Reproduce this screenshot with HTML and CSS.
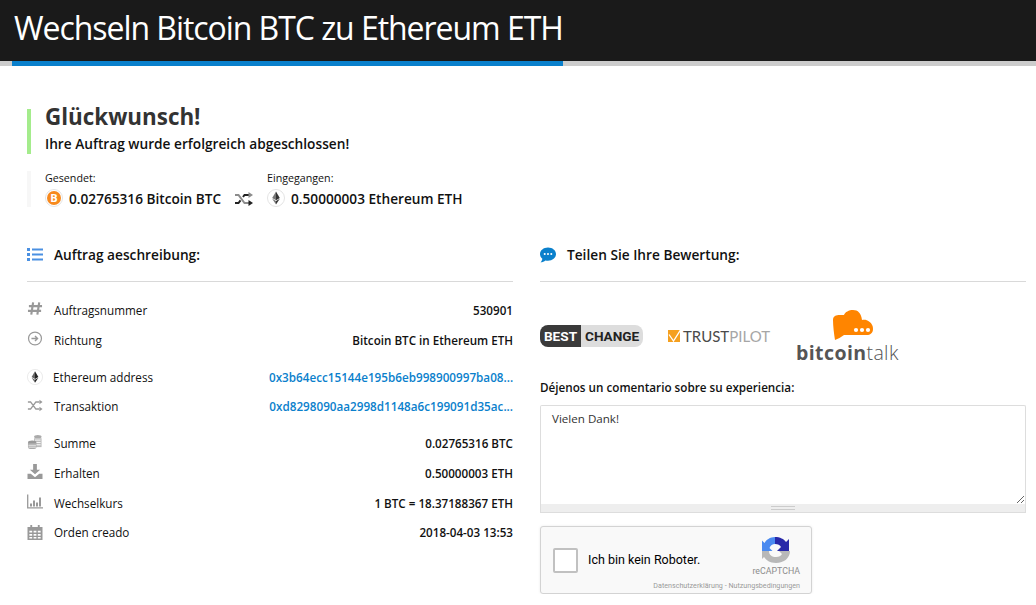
FILE: index.html
```html
<!DOCTYPE html>
<html lang="de">
<head>
    <meta charset="UTF-8">
    <meta name="viewport" content="width=device-width, initial-scale=1.0">
    <title>Wechseln Bitcoin BTC zu Ethereum ETH</title>
    <link rel="stylesheet" href="styles.css">
</head>
<body>
    <header class="page-head">
        <h1>Wechseln Bitcoin BTC zu Ethereum ETH</h1>
    </header>
    <div class="progress"><div class="progress-fill"></div></div>

    <main class="page">
        <div class="success">
            <h2>Glückwunsch!</h2>
            <p>Ihre Auftrag wurde erfolgreich abgeschlossen!</p>
        </div>

        <div class="swap">
            <div class="swap-side swap-from">
                <span class="swap-label">Gesendet:</span>
                <div class="swap-value">
                    <svg class="coin" viewBox="0 0 18 18"><circle cx="9" cy="9" r="8.5" fill="#fff" stroke="#e4e4e4"/><circle cx="9" cy="9" r="7" fill="#f7891d"/><text x="9" y="13" class="coin-b">B</text></svg>
                    0.02765316 Bitcoin BTC
                </div>
            </div>
            <svg class="swap-icon" viewBox="0 0 18 14"><path d="M0 3h3.5l6 8H14" fill="none" stroke="#8c8c8c" stroke-width="2"/><path d="M0 11h3.500l2-2.600M8 5l1.500-2H14" fill="none" stroke="#222" stroke-width="2"/><path d="M13.500 0l4.500 3-4.500 3z" fill="#8c8c8c"/><path d="M13.500 8l4.500 3-4.500 3z" fill="#222"/></svg>
            <div class="swap-side">
                <span class="swap-label">Eingegangen:</span>
                <div class="swap-value">
                    <svg class="coin" viewBox="0 0 18 18"><circle cx="9" cy="9" r="8.500" fill="#fff" stroke="#e4e4e4"/><path d="M9 2.500L5.200 9 9 11.200z" fill="#777"/><path d="M9 2.500L12.800 9 9 11.200z" fill="#333"/><path d="M5.200 9.800L9 15.500v-3.400z" fill="#777"/><path d="M12.800 9.800L9 15.500v-3.400z" fill="#333"/></svg>
                    0.50000003 Ethereum ETH
                </div>
            </div>
        </div>

        <div class="columns">
            <section class="col">
                <h3 class="col-title">
                    <svg class="title-icon" viewBox="0 0 16 13"><path d="M0 0h3v3H0zM5 .5h11v2H5zM0 5h3v3H0zM5 5.500h11v2H5zM0 10h3v3H0zM5 10.500h11v2H5z" fill="#4a90e2"/></svg>
                    Auftrag aeschreibung:
                </h3>

                <ul class="rows">
                    <li class="row">
                        <svg class="row-icon" viewBox="0 0 16 16"><path d="M6 1.500L4 14.500M12.500 1.500L10.500 14.500M1.500 5.500h14M.5 10.500h14" fill="none" stroke="#999" stroke-width="2.300"/></svg>
                        <span class="row-name">Auftragsnummer</span><span class="row-val">530901</span>
                    </li>
                    <li class="row">
                        <svg class="row-icon" viewBox="0 0 16 16"><circle cx="8" cy="8" r="6.900" fill="none" stroke="#999" stroke-width="1.300"/><path d="M4.200 8h6.500M8 5.300L10.700 8 8 10.700" fill="none" stroke="#999" stroke-width="1.500"/></svg>
                        <span class="row-name">Richtung</span><span class="row-val">Bitcoin BTC in Ethereum ETH</span>
                    </li>
                </ul>

                <ul class="rows rows-links">
                    <li class="row">
                        <svg class="row-icon row-icon-eth" viewBox="0 0 18 18"><circle cx="9" cy="9" r="8.500" fill="#fff" stroke="#e8e8e8"/><path d="M9 2.500L5.200 9 9 11.200z" fill="#666"/><path d="M9 2.500L12.800 9 9 11.200z" fill="#222"/><path d="M5.200 9.800L9 15.500v-3.400z" fill="#666"/><path d="M12.800 9.800L9 15.500v-3.400z" fill="#222"/></svg>
                        <span class="row-name row-name-eth">Ethereum address</span><a class="row-val row-link" href="#">0x3b64ecc15144e195b6eb998900997ba08...</a>
                    </li>
                    <li class="row">
                        <svg class="row-icon" viewBox="0 0 18 14"><path d="M1 3h3l6 8h4M1 11h3l6-8h4" fill="none" stroke="#999" stroke-width="1.600"/><path d="M14 .5L17.500 3 14 5.500zM14 8.500l3.500 2.500-3.500 2.500z" fill="#999"/></svg>
                        <span class="row-name">Transaktion</span><a class="row-val row-link" href="#">0xd8298090aa2998d1148a6c199091d35ac...</a>
                    </li>
                </ul>

                <ul class="rows rows-last">
                    <li class="row">
                        <svg class="row-icon" viewBox="0 0 16 16"><ellipse cx="11" cy="2.800" rx="4" ry="1.800" fill="#aaa"/><path d="M7 4.500h8V14H7z" fill="#bbb"/><path d="M8 6.500h6M8 9h6M8 11.500h6" stroke="#fff"/><ellipse cx="5" cy="9" rx="4.500" ry="2" fill="#999"/><path d="M.5 9.500h9V14a4.500 2 0 0 1-9 0z" fill="#aaa"/><path d="M1 12h8M1 14h8" stroke="#fff" stroke-width=".8"/></svg>
                        <span class="row-name">Summe</span><span class="row-val">0.02765316 BTC</span>
                    </li>
                    <li class="row">
                        <svg class="row-icon" viewBox="0 0 16 16"><path d="M6 0h4v6h3.500L8 11 2.500 6H6z" fill="#999"/><path d="M0 10.500h3.500L8 14l4.500-3.500H16V16H0z" fill="#999"/></svg>
                        <span class="row-name">Erhalten</span><span class="row-val">0.50000003 ETH</span>
                    </li>
                    <li class="row">
                        <svg class="row-icon" viewBox="0 0 16 14"><path d="M.7 0v13.300H16" fill="none" stroke="#999" stroke-width="1.300"/><path d="M3 9h2v3H3zM6 6h2v6H6zM9 8h2v4H9zM12 3h2v9h-2z" fill="#999"/></svg>
                        <span class="row-name">Wechselkurs</span><span class="row-val">1 BTC = 18.37188367 ETH</span>
                    </li>
                    <li class="row">
                        <svg class="row-icon row-icon-flat" viewBox="0 0 16 16"><path d="M3 0h2v2h6V0h2v2h3v14H0V2h3z" fill="#999"/><path d="M2 6h3v2H2zM6.500 6h3v2h-3zM11 6h3v2h-3zM2 9.500h3v2H2zM6.500 9.500h3v2h-3zM11 9.500h3v2h-3zM2 12.800h3v1.700H2zM6.500 12.800h3v1.700h-3zM11 12.800h3v1.700h-3z" fill="#fff"/></svg>
                        <span class="row-name">Orden creado</span><span class="row-val">2018-04-03 13:53</span>
                    </li>
                </ul>
            </section>

            <section class="col">
                <h3 class="col-title">
                    <svg class="title-icon title-icon-chat" viewBox="0 0 17 16"><path d="M8.500 0C3.800 0 0 3 0 7c0 2 1 3.800 2.500 5C2.300 13.500 1.500 15 .5 15.800c2.300 0 4-.8 5.200-2 .9.200 1.800.3 2.800.3 4.700 0 8.500-3.100 8.500-7.100S13.200 0 8.500 0z" fill="#0a80cc"/><circle cx="5" cy="7" r="1.100" fill="#fff"/><circle cx="8.500" cy="7" r="1.100" fill="#fff"/><circle cx="12" cy="7" r="1.100" fill="#fff"/></svg>
                    Teilen Sie Ihre Bewertung:
                </h3>

                <div class="logos">
                    <div class="bestchange"><span class="best">BEST</span><span class="change">CHANGE</span></div>
                    <div class="trustpilot">
                        <svg class="tp-mark" viewBox="0 0 12 12"><path d="M0 0h12v12H0z" fill="#f5a01f"/><path d="M1 4.500L5.500 11 12.500 0" fill="none" stroke="#fff" stroke-width="1.300"/></svg>
                        <span class="tp-word"><span class="tp-trust">TRUST</span><span class="tp-pilot">PILOT</span></span>
                    </div>
                    <div class="bitcointalk">
                        <svg class="bt-cloud" viewBox="0 0 40 30"><path d="M2 30C1 24 0 16 0 10 0 6 3 5 7 5h4C12 2 16 0 20 0c5 0 8 3 9 10 2-.5 5-.5 7 1.500 3 2 4 4.500 4 7.500 0 4-3 6-6 6H11c-3 2-6 4-9 5z" fill="#ff8500"/><circle cx="23" cy="20" r="2.100" fill="#fff"/><circle cx="29" cy="20" r="2.100" fill="#fff"/><circle cx="35" cy="20" r="2.100" fill="#fff"/></svg>
                        <div class="bt-word"><b>bitcoin</b>talk</div>
                    </div>
                </div>

                <label class="comment-label" for="comment">Déjenos un comentario sobre su experiencia:</label>
                <div class="comment-wrap">
                    <textarea id="comment" class="comment">Vielen Dank!</textarea>
                    <div class="comment-grip"><span></span></div>
                </div>

                <div class="captcha">
                    <span class="captcha-box"></span>
                    <span class="captcha-text">Ich bin kein Roboter.</span>
                    <div class="captcha-brand">
                        <svg class="captcha-logo" viewBox="0 0 28 26"><path d="M13 0C8 0 4 3 2.500 6L0 3.500V14h10.500L7.500 11C8.500 8.500 10.500 7 13 7z" fill="#4a8af0"/><path d="M13 0c5 0 9 2 11 5l3-3v12H15l4-4c-1-2-3-3-6-3z" fill="#2828a8"/><path d="M0 14h7c0 4 3 6 7 6 3 0 5-1 6-3l-3-3h11c0 7-6 12-14 12-6 0-10-3-12-6l-2 2z" fill="#b8b8b8"/></svg>
                        <span class="captcha-name">reCAPTCHA</span>
                    </div>
                    <span class="captcha-links">Datenschutzerklärung - Nutzungsbedingungen</span>
                </div>
            </section>
        </div>
    </main>
</body>
</html>
```

FILE: styles.css
```css
:root {
    --dark: #1a1a1a;
    --blue: #0a80cc;
    --line: #d9d9d9;
    --text: #111111;
}

* {
    box-sizing: border-box;
}

body {
    margin: 0;
    color: var(--text);
    font-family: "Open Sans", sans-serif;
    font-size: 12px;
    background: #fff;
    overflow: hidden;
}

.page-head {
    height: 61px;
    padding-left: 14px;
    background: var(--dark);
}

.page-head h1 {
    margin: 0;
    color: #fff;
    font-size: 32px;
    font-weight: 400;
    line-height: 55px;
    letter-spacing: -1.05px;
    white-space: nowrap;
}

.progress {
    height: 5px;
    padding-left: 12px;
    background: #cccccc;
}

.progress-fill {
    width: 551px;
    height: 5px;
    background: var(--blue);
}

.page {
    padding: 43px 10px 0 27px;
}

.success {
    height: 45px;
    padding-left: 14px;
    border-left: 4px solid #a4ec8c;
}

.success h2 {
    margin: 0;
    color: #333;
    font-size: 22.400px;
    font-weight: 700;
    line-height: 15px;
}

.success p {
    margin: 11px 0 0;
    font-size: 13.700px;
    font-weight: 600;
    line-height: 18px;
}

.swap {
    display: flex;
    align-items: flex-start;
    height: 36px;
    margin-top: 17px;
    padding-left: 14px;
    border-left: 4px solid #f7f7f7;
}

.swap-from {
    width: 190px;
}

.swap-label {
    display: block;
    font-size: 10.700px;
    line-height: 14px;
}

.swap-value {
    display: flex;
    align-items: center;
    gap: 5px;
    height: 22px;
    margin-top: 2px;
    font-size: 13.650px;
    font-weight: 600;
}

.coin {
    width: 18px;
    height: 18px;
    margin-right: 1px;
}

.coin-b {
    fill: #fff;
    font-family: "Open Sans", sans-serif;
    font-size: 11px;
    font-weight: 700;
    text-anchor: middle;
}

.swap-icon {
    width: 18px;
    height: 14px;
    margin: 21px 14px 0 0;
}

.columns {
    display: grid;
    grid-template-columns: 486px 486px;
    gap: 27px;
    margin-top: 28px;
}

.col-title {
    display: flex;
    align-items: center;
    gap: 11px;
    height: 47px;
    margin: 0;
    padding-bottom: 7px;
    border-bottom: 1px solid var(--line);
    font-size: 13.700px;
    font-weight: 600;
}

.title-icon {
    width: 16px;
    height: 13px;
}

.title-icon-chat {
    width: 16px;
    height: 16px;
}

.rows {
    margin: 13px 0 0;
    padding: 0;
    list-style: none;
}

.rows-links {
    margin-top: 7px;
}

.rows-last {
    margin-top: 8px;
}

.row {
    display: flex;
    align-items: center;
    height: 30px;
}

.rows-links .row {
    height: 29px;
}

.rows-last .row:last-child {
    height: 28px;
}

.row-icon {
    flex: none;
    width: 16px;
    height: 15px;
    margin: 0 11px 3px 0;
}

.rows-links .row-icon {
    margin-bottom: 0;
}

.row-icon-flat {
    margin-bottom: 0;
}

.row-icon.row-icon-eth {
    width: 16px;
    height: 16px;
    margin-right: 10px;
}

.row-name {
    flex: none;
    width: 215px;
    font-size: 11.700px;
}

.row-name-eth {
    width: 216px;
}

.row-val {
    flex: 1;
    min-width: 0;
    font-size: 11.650px;
    font-weight: 600;
    text-align: right;
    white-space: nowrap;
}

.row-link {
    color: var(--blue);
    font-size: 11.700px;
    text-decoration: none;
}

.logos {
    display: flex;
    align-items: flex-start;
    height: 93px;
    padding-top: 27px;
}

.bestchange {
    display: flex;
    width: 103px;
    height: 22px;
    margin-top: 16px;
    overflow: hidden;
    border-radius: 8px;
    font-family: Roboto, sans-serif;
    font-size: 13.600px;
    font-weight: 700;
    line-height: 22px;
}

.best {
    width: 41px;
    color: #fff;
    text-align: center;
    background: #3a3a3a;
}

.change {
    flex: 1;
    padding-left: 4px;
    color: #222;
    background: #dddddd;
}

.trustpilot {
    display: flex;
    align-items: center;
    gap: 3px;
    height: 22px;
    margin: 16px 0 0 25px;
    font-family: Lato, sans-serif;
    font-size: 15px;
}

.tp-mark {
    width: 12px;
    height: 12px;
}

.tp-trust {
    color: #4a4a4a;
}

.tp-pilot {
    color: #a6a6a6;
}

.bitcointalk {
    position: relative;
    width: 104px;
    height: 52px;
    margin: 1px 0 0 26px;
}

.bt-cloud {
    position: absolute;
    top: 0;
    left: 37px;
    width: 40px;
    height: 30px;
}

.bt-word {
    position: absolute;
    bottom: -2px;
    left: 0;
    color: #555;
    font-size: 19.500px;
    font-weight: 300;
    line-height: 22px;
    letter-spacing: 0.4px;
}

.bt-word b {
    font-weight: 700;
}

.comment-label {
    display: block;
    margin-top: 4px;
    font-size: 11.700px;
    font-weight: 600;
    line-height: 17px;
}

.comment-wrap {
    margin-top: 9px;
}

.comment {
    display: block;
    width: 100%;
    height: 99px;
    padding: 5px 11px;
    border: 1px solid #dddddd;
    border-bottom: 0;
    border-radius: 2px 2px 0 0;
    color: #333;
    font-family: "Open Sans", sans-serif;
    font-size: 11.600px;
    outline: none;
}

.comment-grip {
    display: flex;
    align-items: center;
    justify-content: center;
    height: 9px;
    border: 1px solid #dddddd;
    border-top: 0;
    background: #eeeeee;
}

.comment-grip span {
    width: 24px;
    height: 4px;
    border-top: 1px solid #cccccc;
    border-bottom: 1px solid #cccccc;
}

.captcha {
    position: relative;
    display: flex;
    align-items: center;
    width: 272px;
    height: 68px;
    margin-top: 13px;
    padding-left: 12px;
    border: 1px solid #d3d3d3;
    border-radius: 3px;
    background: #f9f9f9;
    box-shadow: 0 0 3px rgba(0, 0, 0, 0.08);
}

.captcha-box {
    width: 25px;
    height: 25px;
    border: 2px solid #c1c1c1;
    border-radius: 2px;
    background: #fff;
}

.captcha-text {
    margin: 0 0 2px 10px;
    color: #000;
    font-family: Roboto, sans-serif;
    font-size: 12.500px;
}

.captcha-brand {
    position: absolute;
    top: 10px;
    right: 11px;
    display: flex;
    flex-direction: column;
    align-items: center;
}

.captcha-logo {
    width: 28px;
    height: 26px;
}

.captcha-name {
    margin-top: 3px;
    color: #8c8c8c;
    font-family: Roboto, sans-serif;
    font-size: 8.800px;
}

.captcha-links {
    position: absolute;
    right: 11px;
    bottom: 3px;
    color: #999;
    font-family: Roboto, sans-serif;
    font-size: 7.150px;
}
```
